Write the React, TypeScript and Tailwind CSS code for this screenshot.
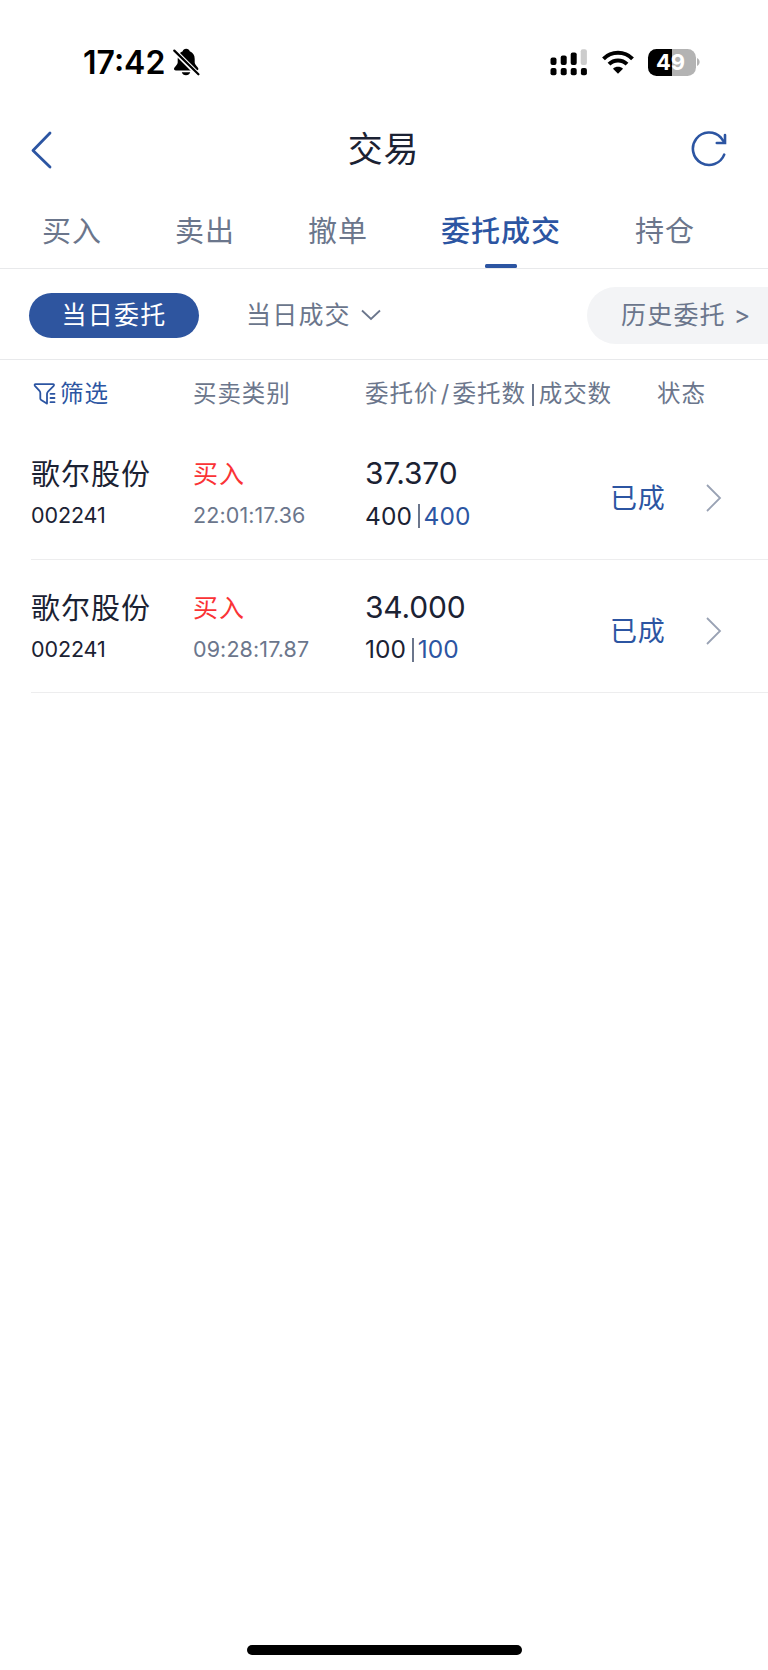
import React from 'react';

interface Order {
  name: string;
  code: string;
  side: string;
  time: string;
  price: string;
  amount: string;
  filled: string;
  status: string;
}

const orders: Order[] = [
  {
    name: '歌尔股份',
    code: '002241',
    side: '买入',
    time: '22:01:17.36',
    price: '37.370',
    amount: '400',
    filled: '400',
    status: '已成'
  },
  {
    name: '歌尔股份',
    code: '002241',
    side: '买入',
    time: '09:28:17.87',
    price: '34.000',
    amount: '100',
    filled: '100',
    status: '已成'
  }
];

const tabs = [
  { label: '买入', offset: 'ml-[42px]' },
  { label: '卖出', offset: 'ml-[73px]' },
  { label: '撤单', offset: 'ml-[73px]' },
  { label: '委托成交', offset: 'ml-[73px]', active: true },
  { label: '持仓', offset: 'ml-[74px]' }
];

const BellOffIcon = () => (
  <svg width="27" height="28" viewBox="0 0 27 28" className="ml-[7px]">
    <path
      d="M13.2 0.8c-1.900 0-3.200 1.100-3.500 2.500C6.400 4.600 4.700 7.300 4.700 11v3.400c0 2.200-3.700 4.700-3.700 6.400 0 1 .7 1.600 1.800 1.600h20.800c1.100 0 1.800-.6 1.800-1.600 0-1.700-3.700-4.200-3.700-6.400V11c0-3.700-1.700-6.400-5-7.700-.3-1.400-1.600-2.500-3.500-2.500z"
      fill="#000"
    />
    <path d="M8.800 24.200h8.400c-.5 1.900-2.100 3-4.200 3s-3.700-1.100-4.200-3z" fill="#000" />
    <path d="M0 1.500L26 27.500" stroke="#fff" strokeWidth="5" />
    <path d="M1.300 2.600L25.400 26.300" stroke="#000" strokeWidth="2.200" strokeLinecap="round" />
  </svg>
);

const SignalIcon = () => (
  <svg width="38" height="27" viewBox="0 0 38 27" fill="#000">
    <rect x="0.500" y="8.500" width="6" height="7.500" rx="2" />
    <rect x="10.700" y="6.500" width="6" height="9.500" rx="2" />
    <rect x="20.700" y="3.500" width="6" height="12.500" rx="2" />
    <rect x="30.700" y="0.300" width="6.200" height="15.700" rx="2" fill="#ccc" />
    <rect x="0.500" y="19" width="6" height="7.200" rx="2" />
    <rect x="10.700" y="19" width="6" height="7.200" rx="2" />
    <rect x="20.700" y="19" width="6" height="7.200" rx="2" />
    <rect x="30.900" y="19" width="6" height="7.200" rx="2" />
  </svg>
);

const WifiIcon = () => (
  <svg width="32" height="24" viewBox="0 0 32 24" fill="none" stroke="#000" strokeWidth="4">
    <path d="M1.500 8.800a20.500 20.500 0 0 1 29 0" />
    <path d="M7 14.200a12.800 12.800 0 0 1 18 0" />
    <path d="M16 23.700l-5-5c2.700-2.600 7.300-2.600 10 0z" fill="#000" stroke="none" />
  </svg>
);

const BatteryIcon = () => (
  <div className="flex items-center">
    <div className="flex h-[27px] w-12 items-center justify-center rounded-[8.500px] bg-[linear-gradient(to_right,#000_50%,#b3b3b3_50%)] pr-0.5 text-[22px] leading-none font-bold text-white">
      49
    </div>
    <svg width="3" height="8" viewBox="0 0 3 8" className="ml-[1.500px]">
      <path d="M0 0c3.500 1.500 3.500 6.500 0 8z" fill="#b3b3b3" />
    </svg>
  </div>
);

const RefreshIcon = () => (
  <svg width="36" height="36" viewBox="0 0 36 36" fill="none" stroke="#2c55a2" strokeWidth="2.600" strokeLinecap="round" strokeLinejoin="miter">
    <path d="M33.200 23.600A16.200 16.200 0 1 1 29.800 6.500L33.500 11.500" />
    <path d="M34 4V12H25.800" />
  </svg>
);

const FilterIcon = () => (
  <svg width="23" height="22" viewBox="0 0 23 22" fill="none" stroke="#2c55a2" strokeWidth="1.800" strokeLinecap="round" strokeLinejoin="round">
    <path d="M13.800 20.600L8.200 17C7.500 16.600 7.300 16.200 7.300 15.500V10C7.300 9 7 8.500 6.300 7.700L1.900 2.800C1.300 2 1.600 1.200 2.600 1.200H20C21 1.200 21.300 2 20.700 2.800L15 8.600C14.200 9.400 14 9.900 14 11V20.500" />
    <path d="M17.500 10.800h4M17.500 15h4M17.500 19.200h4" />
  </svg>
);

const OrderRow: React.FC<{ order: Order }> = ({ order }) => (
  <div className="ml-[31px] flex h-[133.500px] border-b border-[#ededee]">
    <div className="w-[162px] pt-[26px]">
      <div className="h-[42px] text-[29px] leading-[45px] tracking-[1px]">{order.name}</div>
      <div className="h-[42px] text-[21.500px] leading-[42px] tracking-[-0.100px]">{order.code}</div>
    </div>
    <div className="w-[172px] pt-[26px]">
      <div className="h-[42px] text-[25px] leading-[44px] tracking-[1px] text-[#fa3336]">{order.side}</div>
      <div className="h-[42px] text-[21.500px] leading-[42px] tracking-[0.100px] text-[#6b768c]">{order.time}</div>
    </div>
    <div className="w-[245px] pt-[26px]">
      <div className="h-[43px] text-[30px] leading-[43px] tracking-[-0.200px]">{order.price}</div>
      <div className="flex h-[42px] items-center text-[24.500px] tracking-[0.100px]">
        <span>{order.amount}</span>
        <span className="mr-1 ml-[6px] h-6 w-[1.500px] bg-[#6b768c]" />
        <span className="text-[#2c55a2]">{order.filled}</span>
      </div>
    </div>
    <div className="flex flex-1 items-center pt-[11px]">
      <span className="w-[95px] pt-0.5 text-[27px] tracking-[0.800px] text-[#2c55a2]">{order.status}</span>
      <svg width="17" height="28" viewBox="0 0 17 28" fill="none" stroke="#99a2b4" strokeWidth="1.800">
        <path d="M2 1l13 13L2 27" />
      </svg>
    </div>
  </div>
);

const App: React.FC = () => {
  return (
    <div className="flex h-[1670px] w-[768px] flex-col overflow-hidden bg-white font-[Inter,'Noto_Sans_CJK_SC',sans-serif] whitespace-nowrap text-[#1b2233]">
      <div className="flex h-[124px] items-center pl-[83px] text-black">
        <span className="w-[83px] pt-0.5 text-[32px] leading-none font-semibold">17:42</span>
        <BellOffIcon />
        <div className="ml-auto flex items-center gap-[14px] pr-[68px]">
          <SignalIcon />
          <WifiIcon />
          <BatteryIcon />
        </div>
      </div>

      <div className="flex h-[50px] items-center justify-between pr-[41px] pl-[31px]">
        <svg width="22" height="38" viewBox="0 0 22 38" fill="none" stroke="#2c55a2" strokeWidth="2.800" strokeLinecap="round" strokeLinejoin="round" className="mt-0.5">
          <path d="M19 2L2 19.500L19 36" />
        </svg>
        <h1 className="ml-[23px] text-[35px] leading-none tracking-[0.800px]">交易</h1>
        <RefreshIcon />
      </div>

      <div className="flex h-[95px] items-end border-b border-[#e8e9eb]">
        {tabs.map((tab) => (
          <div key={tab.label} className={`flex flex-col items-center ${tab.offset}`}>
            <span
              className={`h-[52px] text-[29px] leading-[40px] tracking-[1px] ${
                tab.active ? 'font-medium text-[#2c55a2]' : 'text-[#6b768c]'
              }`}
            >
              {tab.label}
            </span>
            <span className={`h-1 w-8 rounded-[1.500px] ${tab.active ? 'bg-[#2c55a2]' : ''}`} />
          </div>
        ))}
      </div>

      <div className="flex h-[91px] items-center border-b border-[#e8e9eb] pt-0.5 pl-[29px] text-[25px] tracking-[1.200px] text-[#6b768c]">
        <div className="flex h-[45px] w-[170px] items-center justify-center rounded-full bg-[#2e559f] pt-px text-white">
          当日委托
        </div>
        <div className="ml-[47px] flex items-center pt-px">
          当日成交
          <svg width="20" height="12" viewBox="0 0 20 12" fill="none" stroke="#6b768c" strokeWidth="1.800" className="mb-px ml-[10px]">
            <path d="M1 1.500l9 8.500 9-8.500" />
          </svg>
        </div>
        <div className="ml-auto flex h-[57px] w-[181px] items-center rounded-l-full bg-[#f3f4f6] pt-px pl-[34px]">
          历史委托<span className="ml-2">&gt;</span>
        </div>
      </div>

      <div className="flex h-[66px] items-center pt-px pl-[33px] text-[23.500px] tracking-[0.900px] text-[#6b768c]">
        <div className="flex w-[160px] items-center gap-1 text-[#2c55a2]">
          <FilterIcon />
          筛选
        </div>
        <div className="w-[172px]">买卖类别</div>
        <div className="flex w-[292px] items-center">
          委托价<span className="mx-[2.500px]">/</span>委托数
          <span className="mt-[3px] mr-[5px] ml-1.5 h-[22px] w-0.5 bg-[#6b768c]" />
          成交数
        </div>
        <div>状态</div>
      </div>

      {orders.map((order) => (
        <OrderRow key={order.time} order={order} />
      ))}

      <div className="mx-auto mt-auto mb-[15px] h-[10px] w-[275px] rounded-full bg-black" />
    </div>
  );
};

export default App;
